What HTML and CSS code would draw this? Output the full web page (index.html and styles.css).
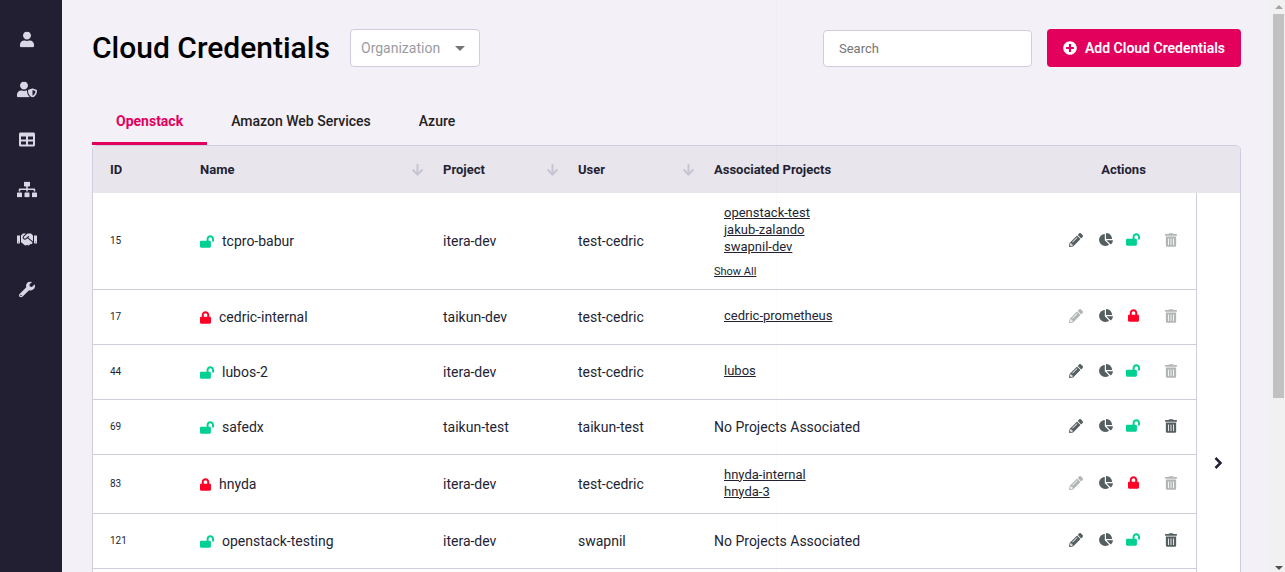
FILE: index.html
```html
<!DOCTYPE html>
<html lang="en">
<head>
<meta charset="utf-8">
<title>Cloud Credentials</title>
<link rel="stylesheet" href="styles.css">
</head>
<body>
<svg class="sprite" aria-hidden="true">
  <symbol id="user" viewBox="0 0 448 512"><path d="M224 256c70.7 0 128-57.3 128-128S294.7 0 224 0 96 57.3 96 128s57.3 128 128 128zm89.6 32h-16.7c-22.2 10.2-46.9 16-72.9 16s-50.6-5.8-72.9-16h-16.7C60.2 288 0 348.2 0 422.4V464c0 26.5 21.5 48 48 48h352c26.5 0 48-21.5 48-48v-41.6c0-74.2-60.2-134.4-134.4-134.4z"/></symbol>
  <symbol id="user-shield" viewBox="0 0 640 512"><path d="M622.3 271.1l-115.2-45c-4.1-1.6-12.6-3.7-22.2 0l-115.2 45c-10.7 4.2-17.7 14-17.7 24.9 0 111.6 68.7 188.8 132.9 213.9 9.6 3.7 18 1.6 22.2 0C558.4 489.9 640 420.5 640 296c0-10.9-7-20.7-17.7-24.9zM496 462.4V273.3l95.5 37.3c-5.6 87.1-60.9 135.4-95.5 151.8zM224 256c70.7 0 128-57.3 128-128S294.7 0 224 0 96 57.3 96 128s57.3 128 128 128zm96 40c0-2.5.8-4.8 1.1-7.2-2.5-.1-4.9-.8-7.5-.8h-16.7c-22.2 10.2-46.9 16-72.9 16s-50.6-5.8-72.9-16h-16.7C60.2 288 0 348.2 0 422.4V464c0 26.5 21.5 48 48 48h352c6.8 0 13.3-1.5 19.2-4-54-42.9-99.2-116.7-99.2-212z"/></symbol>
  <symbol id="table" viewBox="0 0 512 512"><path d="M464 32H48C21.5 32 0 53.5 0 80v352c0 26.5 21.5 48 48 48h416c26.500 0 48-21.500 48-48V80c0-26.500-21.500-48-48-48zM224 416H64v-96h160v96zm0-160H64v-96h160v96zm224 160H288v-96h160v96zm0-160H288v-96h160v96z"/></symbol>
  <symbol id="sitemap" viewBox="0 0 640 512"><path d="M128 352H32c-17.67 0-32 14.33-32 32v96c0 17.67 14.33 32 32 32h96c17.67 0 32-14.33 32-32v-96c0-17.67-14.33-32-32-32zm-24-80h192v48h48v-48h192v48h48v-57.59c0-21.17-17.23-38.41-38.41-38.41H344v-64h40c17.67 0 32-14.33 32-32V32c0-17.67-14.33-32-32-32H256c-17.67 0-32 14.33-32 32v96c0 17.67 14.33 32 32 32h40v64H94.41C73.23 224 56 241.23 56 262.41V320h48v-48zm264 80h-96c-17.67 0-32 14.33-32 32v96c0 17.67 14.33 32 32 32h96c17.67 0 32-14.33 32-32v-96c0-17.67-14.33-32-32-32zm240 0h-96c-17.67 0-32 14.33-32 32v96c0 17.67 14.33 32 32 32h96c17.67 0 32-14.33 32-32v-96c0-17.67-14.33-32-32-32z"/></symbol>
  <symbol id="handshake" viewBox="0 0 640 512"><path d="M434.7 64h-85.9c-8 0-15.7 3-21.6 8.4l-98.3 90c-.1.1-.2.3-.3.4-16.6 15.6-16.3 40.5-2.1 56 12.7 13.9 39.4 17.6 56.1 2.7.1-.1.3-.1.4-.2l79.9-73.2c6.5-5.9 16.7-5.5 22.6 1 6 6.5 5.5 16.6-1 22.6l-26.1 23.9L504 313.800c2.900 2.400 5.500 5 7.900 7.700V128l-54.600-54.600c-5.900-6-14.100-9.400-22.600-9.400zM544 128.200v223.900c0 17.700 14.300 32 32 32h64V128.200h-96zm48 223.900c-8.800 0-16-7.200-16-16s7.200-16 16-16 16 7.200 16 16-7.200 16-16 16zM0 384h64c17.700 0 32-14.300 32-32V128.200H0V384zm48-63.900c8.800 0 16 7.200 16 16s-7.200 16-16 16-16-7.200-16-16c0-8.900 7.200-16 16-16zm435.900 18.600L334.600 217.500l-30 27.500c-29.700 27.100-75.200 24.500-101.700-4.400-26.900-29.400-24.800-74.900 4.400-101.700L289.100 64h-83.800c-8.500 0-16.600 3.400-22.600 9.400L128 128v223.900h18.300l90.500 81.900c27.400 22.300 67.700 18.100 90-9.300l.2-.2 17.900 15.500c15.900 13 39.400 10.500 52.300-5.400l31.400-38.600 5.400 4.400c13.700 11.100 33.900 9.100 45-4.700l9.500-11.700c11.200-13.800 9.100-33.900-4.600-45.100z"/></symbol>
  <symbol id="wrench" viewBox="0 0 512 512"><path d="M507.73 109.1c-2.24-9.03-13.54-12.09-20.12-5.51l-74.36 74.36-67.88-11.31-11.31-67.88 74.36-74.36c6.62-6.62 3.43-17.9-5.66-20.16-47.38-11.74-99.55.91-136.58 37.93-39.64 39.64-50.55 97.1-34.05 147.2L18.74 402.76c-24.99 24.99-24.99 65.51 0 90.5 24.99 24.99 65.51 24.99 90.5 0l213.21-213.21c50.12 16.71 107.47 5.68 147.37-34.22 37.07-37.07 49.7-89.32 37.91-136.73zM64 472c-13.25 0-24-10.75-24-24 0-13.26 10.75-24 24-24s24 10.740 24 24c0 13.25-10.75 24-24 24z"/></symbol>
  <symbol id="lock" viewBox="0 0 448 512"><path d="M400 224h-24v-72C376 68.2 307.8 0 224 0S72 68.2 72 152v72H48c-26.5 0-48 21.5-48 48v192c0 26.5 21.5 48 48 48h352c26.5 0 48-21.5 48-48V272c0-26.5-21.5-48-48-48zm-104 0H152v-72c0-39.7 32.3-72 72-72s72 32.3 72 72v72z"/></symbol>
  <symbol id="lock-open" viewBox="0 0 576 512"><path d="M423.5 0C339.5.3 272 69.5 272 153.5V224H48c-26.5 0-48 21.5-48 48v192c0 26.5 21.5 48 48 48h352c26.5 0 48-21.5 48-48V272c0-26.5-21.5-48-48-48h-48v-71.100c0-39.600 31.700-72.500 71.300-72.900 40-.4 72.700 32.100 72.700 72v80c0 13.300 10.700 24 24 24h32c13.300 0 24-10.700 24-24v-80C576 68 507.500-.3 423.500 0z"/></symbol>
  <symbol id="plus" viewBox="0 0 512 512"><path d="M256 8C119 8 8 119 8 256s111 248 248 248 248-111 248-248S393 8 256 8zm144 276c0 6.600-5.400 12-12 12h-92v92c0 6.600-5.400 12-12 12h-56c-6.600 0-12-5.400-12-12v-92h-92c-6.600 0-12-5.400-12-12v-56c0-6.600 5.400-12 12-12h92v-92c0-6.600 5.400-12 12-12h56c6.600 0 12 5.400 12 12v92h92c6.600 0 12 5.400 12 12v56z"/></symbol>
  <symbol id="pie" viewBox="0 0 544 512"><path d="M527.79 288H290.5l158.03 158.03c6.04 6.04 15.98 6.53 22.19.68 38.7-36.46 65.32-85.61 73.13-140.86 1.34-9.46-6.51-17.85-16.06-17.85zm-15.83-64.8C503.72 103.74 408.26 8.28 288.8.04 279.68-.59 272 7.1 272 16.24V240h223.77c9.14 0 16.82-7.68 16.19-16.8zM224 288V50.71c0-9.55-8.39-17.4-17.84-16.06C86.99 51.49-4.1 155.6.14 280.37 4.5 408.51 114.83 513.59 243.03 511.98c50.4-.63 96.97-16.87 135.26-44.03 7.9-5.6 8.42-17.23 1.57-24.08L224 288z"/></symbol>
  <symbol id="trash" viewBox="0 0 448 512"><path d="M32 464a48 48 0 0 0 48 48h288a48 48 0 0 0 48-48V128H32zm272-256a16 16 0 0 1 32 0v224a16 16 0 0 1-32 0zm-96 0a16 16 0 0 1 32 0v224a16 16 0 0 1-32 0zm-96 0a16 16 0 0 1 32 0v224a16 16 0 0 1-32 0zM432 32H312l-9.400-18.700A24 24 0 0 0 281.100 0H166.800a23.720 23.720 0 0 0-21.400 13.300L136 32H16A16 16 0 0 0 0 48v32a16 16 0 0 0 16 16h416a16 16 0 0 0 16-16V48a16 16 0 0 0-16-16z"/></symbol>
  <symbol id="pencil" viewBox="0 0 512 512"><path d="M497.9 142.1l-46.1 46.1c-4.7 4.7-12.3 4.7-17 0l-111-111c-4.7-4.7-4.7-12.3 0-17l46.1-46.1c18.7-18.7 49.1-18.7 67.9 0l60.1 60.1c18.8 18.7 18.8 49.1 0 67.9zM284.2 99.8L21.6 362.4.4 483.900c-2.900 16.400 11.400 30.600 27.800 27.800l121.500-21.300 262.600-262.600c4.700-4.700 4.700-12.300 0-17l-111-111c-4.800-4.700-12.400-4.700-17.100 0zM124.100 339.900c-5.500-5.500-5.500-14.300 0-19.800l154-154c5.500-5.500 14.300-5.500 19.800 0s5.500 14.300 0 19.800l-154 154c-5.500 5.500-14.300 5.500-19.800 0zM88 424h48v36.300l-64.500 11.300-31.100-31.100L51.700 376H88v48z"/></symbol>
  <symbol id="sort" viewBox="0 0 12 14"><path d="M5.500 1v11M.5 6.500l5 5 5-5" fill="none" stroke="currentColor" stroke-width="2"/></symbol>
</svg>

<div class="app">
  <nav class="sidebar">
    <a><svg class="w14"><use href="#user"/></svg></a>
    <a><svg class="w20"><use href="#user-shield"/></svg></a>
    <a><svg class="w16"><use href="#table"/></svg></a>
    <a><svg class="w20"><use href="#sitemap"/></svg></a>
    <a><svg class="w20"><use href="#handshake"/></svg></a>
    <a><svg class="w16"><use href="#wrench"/></svg></a>
  </nav>

  <main class="content">
    <header class="topbar">
      <h1>Cloud Credentials</h1>
      <div class="select"><span>Organization</span><i class="caret"></i></div>
      <input class="search" type="text" placeholder="Search">
      <button class="add"><svg><use href="#plus"/></svg>Add Cloud Credentials</button>
    </header>

    <div class="tabs">
      <a class="tab active">Openstack</a>
      <a class="tab">Amazon Web Services</a>
      <a class="tab">Azure</a>
    </div>

    <section class="panel">
      <div class="grid head">
        <span>ID</span>
        <span>Name<svg><use href="#sort"/></svg></span>
        <span>Project<svg><use href="#sort"/></svg></span>
        <span>User<svg><use href="#sort"/></svg></span>
        <span>Associated Projects</span>
        <span class="center">Actions</span>
      </div>
      <div class="body">
        <div class="rows">
          <div class="grid row tall">
            <span class="id">15</span>
            <span class="name"><svg class="open"><use href="#lock-open"/></svg>tcpro-babur</span>
            <span>itera-dev</span><span>test-cedric</span>
            <div class="projects"><a>openstack-test</a><a>jakub-zalando</a><a>swapnil-dev</a><a class="all">Show All</a></div>
            <div class="actions"><svg class="pencil"><use href="#pencil"/></svg><svg class="pie"><use href="#pie"/></svg><b><svg class="open"><use href="#lock-open"/></svg></b><svg class="trash off"><use href="#trash"/></svg></div>
          </div>
          <div class="grid row">
            <span class="id">17</span>
            <span class="name"><svg class="shut"><use href="#lock"/></svg>cedric-internal</span>
            <span>taikun-dev</span><span>test-cedric</span>
            <div class="projects"><a>cedric-prometheus</a></div>
            <div class="actions"><svg class="pencil off"><use href="#pencil"/></svg><svg class="pie"><use href="#pie"/></svg><b><svg class="shut"><use href="#lock"/></svg></b><svg class="trash off"><use href="#trash"/></svg></div>
          </div>
          <div class="grid row">
            <span class="id">44</span>
            <span class="name"><svg class="open"><use href="#lock-open"/></svg>lubos-2</span>
            <span>itera-dev</span><span>test-cedric</span>
            <div class="projects"><a>lubos</a></div>
            <div class="actions"><svg class="pencil"><use href="#pencil"/></svg><svg class="pie"><use href="#pie"/></svg><b><svg class="open"><use href="#lock-open"/></svg></b><svg class="trash off"><use href="#trash"/></svg></div>
          </div>
          <div class="grid row">
            <span class="id">69</span>
            <span class="name"><svg class="open"><use href="#lock-open"/></svg>safedx</span>
            <span>taikun-test</span><span>taikun-test</span>
            <span>No Projects Associated</span>
            <div class="actions"><svg class="pencil"><use href="#pencil"/></svg><svg class="pie"><use href="#pie"/></svg><b><svg class="open"><use href="#lock-open"/></svg></b><svg class="trash"><use href="#trash"/></svg></div>
          </div>
          <div class="grid row double">
            <span class="id">83</span>
            <span class="name"><svg class="shut"><use href="#lock"/></svg>hnyda</span>
            <span>itera-dev</span><span>test-cedric</span>
            <div class="projects"><a>hnyda-internal</a><a>hnyda-3</a></div>
            <div class="actions"><svg class="pencil off"><use href="#pencil"/></svg><svg class="pie"><use href="#pie"/></svg><b><svg class="shut"><use href="#lock"/></svg></b><svg class="trash off"><use href="#trash"/></svg></div>
          </div>
          <div class="grid row">
            <span class="id">121</span>
            <span class="name"><svg class="open"><use href="#lock-open"/></svg>openstack-testing</span>
            <span>itera-dev</span><span>swapnil</span>
            <span>No Projects Associated</span>
            <div class="actions"><svg class="pencil"><use href="#pencil"/></svg><svg class="pie"><use href="#pie"/></svg><b><svg class="open"><use href="#lock-open"/></svg></b><svg class="trash"><use href="#trash"/></svg></div>
          </div>
        </div>
        <div class="next"><svg viewBox="0 0 10 14"><path d="M1.500 2l5 5-5 5"/></svg></div>
      </div>
    </section>
  </main>

  <div class="scrollbar"><i class="up"></i><div class="thumb"></div><i class="down"></i></div>
  <div class="seam"></div>
</div>
</body>
</html>
```
FILE: styles.css
```css
* { box-sizing: border-box; }
body {
  margin: 0;
  overflow: hidden;
  font: 14px/20px Roboto, sans-serif;
  color: #231f34;
}
.sprite { position: absolute; width: 0; height: 0; }
svg { display: block; fill: currentColor; flex: none; }
.app { display: flex; height: 572px; overflow: hidden; background: #f3f0f8; }

.sidebar {
  width: 62px;
  padding: 14px 8px 0 0;
  background: #231f32;
  color: #d9d6e6;
  display: flex;
  flex-direction: column;
}
.sidebar a { height: 50px; display: flex; align-items: center; justify-content: center; }
.sidebar svg { height: 16px; transform: translateY(.4px); }
.w14 { width: 14px; }
.w16 { width: 16px; }
.w20 { width: 20px; }

.content { flex: 1; padding: 29px 29px 0 30px; min-width: 0; }
.topbar { display: flex; height: 38px; align-items: flex-end; }
h1 {
  width: 258px;
  margin: 0;
  font-size: 30px;
  line-height: 38px;
  font-weight: 500;
  color: #000;
  white-space: nowrap;
}
.select {
  width: 130px;
  height: 38px;
  padding: 0 14px 0 10px;
  display: flex;
  align-items: center;
  justify-content: space-between;
  background: #fff;
  border: 1px solid #cfcddd;
  border-radius: 4px;
  color: #9b9b9f;
}
.caret { border: 5px solid transparent; border-top-color: #757575; border-bottom: 0; }
.search {
  width: 209px;
  height: 37px;
  margin-left: auto;
  padding: 0 15px;
  border: 1px solid #cfcddd;
  border-radius: 4px;
  background: #fff;
  font: 13px Roboto, sans-serif;
}
.search::placeholder { color: #757575; }
.add {
  width: 194px;
  height: 38px;
  margin-left: 15px;
  padding: 0 16px;
  display: flex;
  align-items: center;
  gap: 8px;
  border: 0;
  border-radius: 4px;
  background: #e3005d;
  color: #fff;
  font: 600 14px Roboto, sans-serif;
  white-space: nowrap;
}
.add svg { width: 14px; height: 14px; }

.tabs { display: flex; height: 48px; margin-top: 30px; }
.tab { padding: 14px 24px 0; font-weight: 500; color: #222; }
.tab.active { font-weight: 700; color: #e3005d; border-bottom: 3px solid #e3005d; }

.panel {
  height: 440px;
  border: 1px solid #cfcddd;
  border-radius: 5px 5px 0 0;
  overflow: hidden;
  background: #fff;
}
.grid {
  display: grid;
  width: 1103px;
  grid-template-columns: 90px 243px 135px 136px 354px 145px;
  align-items: center;
}
.grid > * { padding-left: 17px; }
.head { height: 47px; width: 100%; background: #e8e5ec; font-size: 13px; font-weight: 700; }
.head span { display: flex; justify-content: space-between; align-items: center; padding-right: 2px; }
.head svg { width: 12px; height: 14px; color: #c7c4d4; }
.head .center { padding: 0; justify-content: center; }
.body { display: flex; height: 392px; }
.rows { width: 1104px; border-right: 1px solid #cfcddd; }
.row { height: 55px; border-bottom: 1px solid #cfcddd; }
.row.tall { height: 97px; }
.row.double { height: 59px; }
.id { font-size: 10px; }
.name { display: flex; align-items: center; }
.name svg { margin-right: 8px; }
.open { width: 14px; height: 13px; color: #00d092; }
.shut { width: 11px; height: 13px; color: #ff0026; }
.projects {
  display: flex;
  flex-direction: column;
  align-items: flex-start;
  padding: 0 0 3px 27px;
  font-size: 13px;
  line-height: 17px;
  text-decoration: underline;
}
.tall .projects { padding: 2px 0 0 27px; }
.projects .all { margin: 8px 0 0 -10px; font-size: 11px; }
.grid > .actions {
  display: grid;
  grid-template-columns: 30px 27.4px 38.6px 14px;
  padding: 0 0 2px 18px;
  color: #555e60;
}
.actions svg { height: 13px; }
.actions .pencil { width: 14px; height: 14px; }
.actions .pie { width: 14px; }
.actions b { width: 14px; display: flex; justify-content: center; }
.actions .trash { width: 12px; height: 14px; }
.off { opacity: .45; }
.next { flex: 1; padding: 263px 0 0 17px; }
.next svg { width: 10px; height: 14px; fill: none; stroke: #231f34; stroke-width: 2.5; }

.scrollbar {
  width: 15px;
  padding: 5px 1px 2px 3px;
  background: #f1f1f1;
  display: flex;
  flex-direction: column;
  align-items: center;
}
.up { border: 4px solid transparent; border-top: 0; border-bottom-color: #a3a3a3; }
.thumb { width: 11px; height: 384px; margin-top: 5px; background: #c1c1c1; }
.down { margin-top: auto; border: 4px solid transparent; border-bottom: 0; border-top-color: #505050; }
.seam { position: absolute; left: 776px; top: 0; width: 1px; height: 572px; background: rgba(35, 31, 52, .02); }
```
